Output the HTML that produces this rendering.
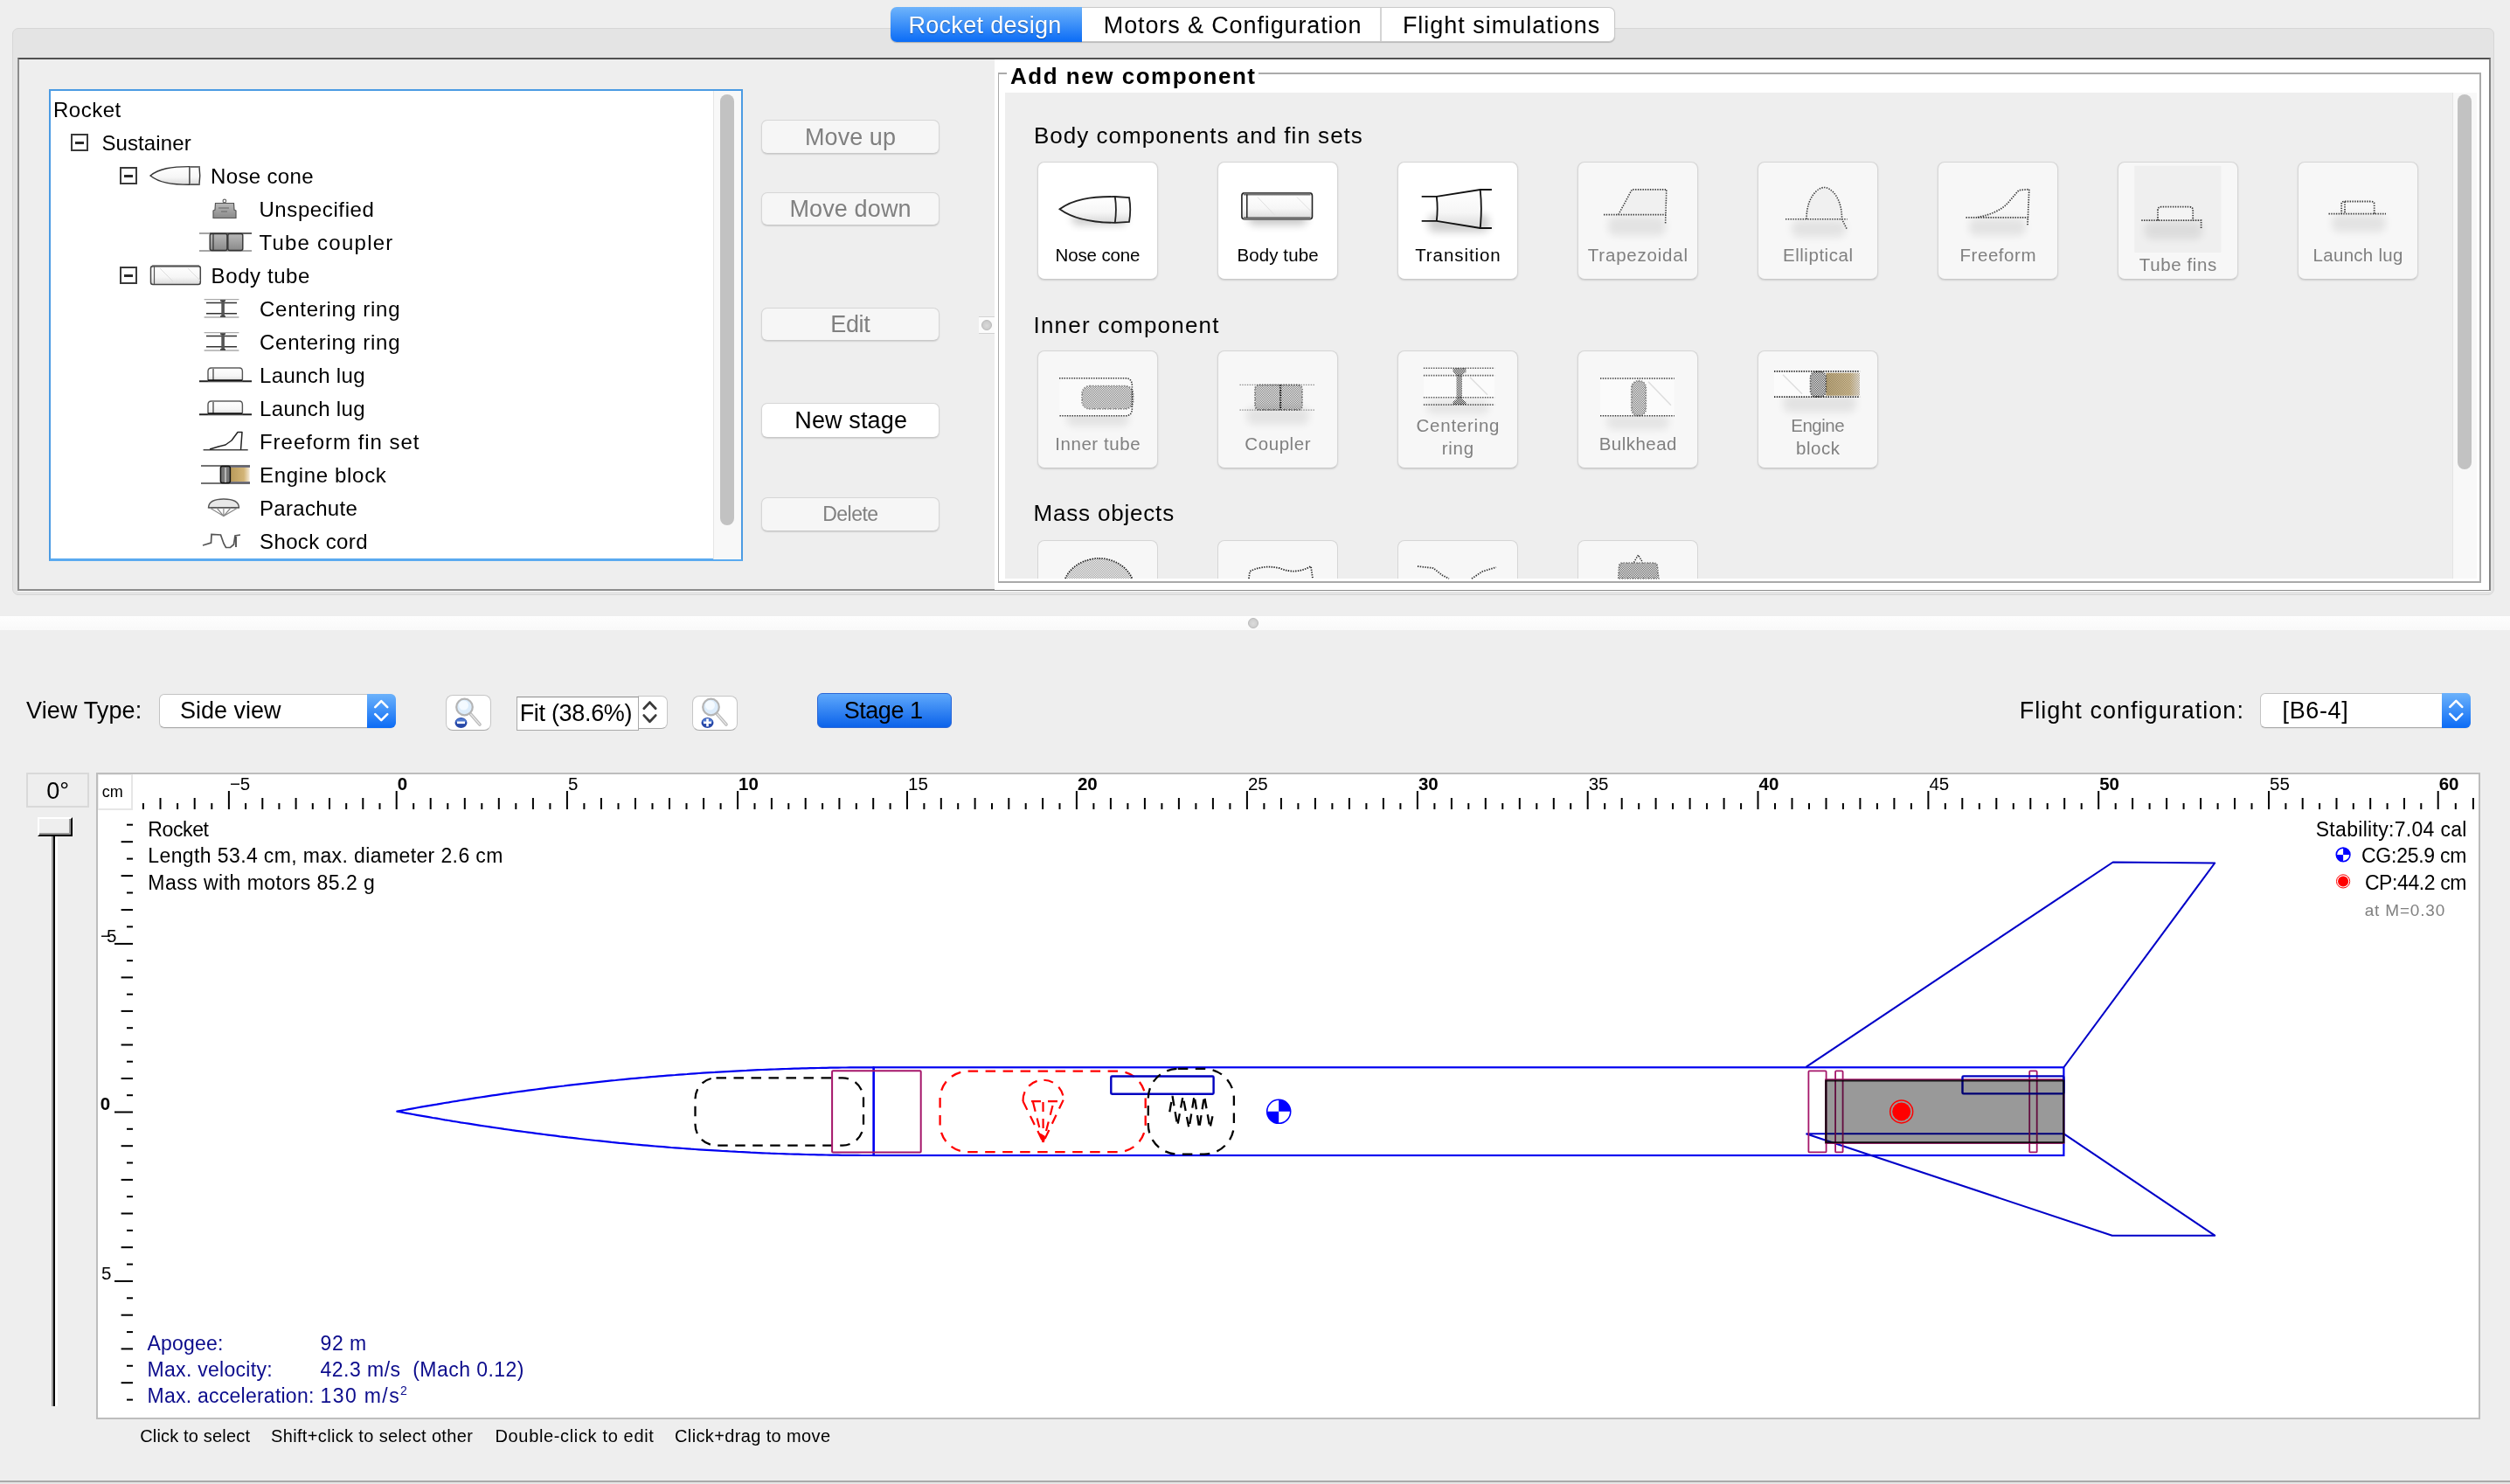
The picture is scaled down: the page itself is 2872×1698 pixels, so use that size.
<!DOCTYPE html>
<html><head><meta charset="utf-8"><style>
html,body{margin:0;padding:0}
body{width:2872px;height:1698px;overflow:hidden;position:relative;background:#eeeeee;font-family:'Liberation Sans',sans-serif}
</style></head><body>
<div style="position:absolute;left:14.0px;top:32.0px;width:2840.0px;height:649.0px;background:#e4e4e4;border:1px solid #d6d6d6;border-radius:7px;box-sizing:border-box"></div>
<div style="position:absolute;left:20.0px;top:66.0px;width:2830.0px;height:610.0px;background:#eeeeee;border-top:2px solid #505050;border-left:2px solid #8c8c8c;border-right:2px solid #858585;border-bottom:2px solid #8c8c8c;box-sizing:border-box"></div>
<div style="position:absolute;left:1019.0px;top:8.0px;width:219.0px;height:40.0px;background:linear-gradient(#6fb4fb,#0b6cf6);border-radius:7px 0 0 7px;box-shadow:0 1px 1px rgba(0,0,0,0.25)"></div>
<div style="position:absolute;left:1238.0px;top:8.0px;width:610.0px;height:40.0px;background:#fff;border:1px solid #c9c9c9;border-left:none;border-radius:0 7px 7px 0;box-sizing:border-box;box-shadow:0 1px 1px rgba(0,0,0,0.2)"></div>
<div style="position:absolute;left:1579.0px;top:9.0px;width:2.0px;height:38.0px;background:#d4d4d4"></div>
<div style="position:absolute;left:56.0px;top:102.0px;width:794.0px;height:539.6px;background:#fff;border:2px solid #4b9be3;border-bottom:3px solid #5aaaf0;box-sizing:border-box"></div>
<div style="position:absolute;left:20.0px;top:676.0px;width:2830.0px;height:1.0px;background:#fafafa"></div>
<div style="position:absolute;left:816.0px;top:104.0px;width:32.0px;height:536.0px;background:#f8f8f8;border-left:1px solid #e6e6e6;box-sizing:border-box"></div>
<div style="position:absolute;left:824.0px;top:108.0px;width:16.0px;height:493.0px;background:#c2c2c2;border-radius:8px"></div>
<div style="position:absolute;left:81.0px;top:153.0px;width:20.0px;height:20.0px;border:2px solid #3a3a3a;box-sizing:border-box;background:#fff"></div>
<div style="position:absolute;left:86.0px;top:161.5px;width:10.0px;height:3.0px;background:#2a2a2a"></div>
<div style="position:absolute;left:137.0px;top:191.0px;width:20.0px;height:20.0px;border:2px solid #3a3a3a;box-sizing:border-box;background:#fff"></div>
<div style="position:absolute;left:142.0px;top:199.5px;width:10.0px;height:3.0px;background:#2a2a2a"></div>
<div style="position:absolute;left:137.0px;top:305.0px;width:20.0px;height:20.0px;border:2px solid #3a3a3a;box-sizing:border-box;background:#fff"></div>
<div style="position:absolute;left:142.0px;top:313.5px;width:10.0px;height:3.0px;background:#2a2a2a"></div>
<div style="position:absolute;left:871.0px;top:136.7px;width:203.5px;height:39.3px;background:#f6f6f6;border:1px solid #d6d6d6;border-bottom-color:#c8c8c8;border-radius:7px;box-sizing:border-box;box-shadow:0 1px 1.5px rgba(0,0,0,0.12)"></div>
<div style="position:absolute;left:871.0px;top:219.7px;width:203.5px;height:38.3px;background:#f6f6f6;border:1px solid #d6d6d6;border-bottom-color:#c8c8c8;border-radius:7px;box-sizing:border-box;box-shadow:0 1px 1.5px rgba(0,0,0,0.12)"></div>
<div style="position:absolute;left:871.0px;top:351.7px;width:203.5px;height:38.3px;background:#f6f6f6;border:1px solid #d6d6d6;border-bottom-color:#c8c8c8;border-radius:7px;box-sizing:border-box;box-shadow:0 1px 1.5px rgba(0,0,0,0.12)"></div>
<div style="position:absolute;left:871.0px;top:460.7px;width:203.5px;height:40.3px;background:#ffffff;border:1px solid #d6d6d6;border-bottom-color:#c8c8c8;border-radius:7px;box-sizing:border-box;box-shadow:0 1px 1.5px rgba(0,0,0,0.12)"></div>
<div style="position:absolute;left:871.0px;top:568.7px;width:203.5px;height:39.3px;background:#f6f6f6;border:1px solid #d6d6d6;border-bottom-color:#c8c8c8;border-radius:7px;box-sizing:border-box;box-shadow:0 1px 1.5px rgba(0,0,0,0.12)"></div>
<div style="position:absolute;left:1120.0px;top:362.0px;width:18.0px;height:20.0px;background:#fbfbfb;border-top:1px solid #d2d2d2;border-bottom:1px solid #d2d2d2;box-sizing:border-box"></div>
<div style="position:absolute;left:1123.0px;top:366.0px;width:12.0px;height:12.0px;background:radial-gradient(circle at 50% 55%,#dadada,#c4c4c4);border:1px solid #b8b8b8;border-radius:50%;box-sizing:border-box"></div>
<div style="position:absolute;left:1138.0px;top:68.0px;width:1710.0px;height:607.0px;background:#fff"></div>
<div style="position:absolute;left:1142.0px;top:83.0px;width:1697.0px;height:584.0px;border:2px solid #aaaaaa;border-left-width:1px;box-sizing:border-box"></div>
<div style="position:absolute;left:1152.0px;top:70.0px;width:288.0px;height:30.0px;background:#fff"></div>
<div style="position:absolute;left:1150.0px;top:106.0px;width:1684.0px;height:556.0px;background:#eeeeee"></div>
<div style="position:absolute;left:2806.0px;top:106.0px;width:28.0px;height:556.0px;background:#f8f8f8;border-left:1px solid #e4e4e4;box-sizing:border-box"></div>
<div style="position:absolute;left:2812.0px;top:108.0px;width:16.0px;height:429.0px;background:#c2c2c2;border-radius:8px"></div>
<div style="position:absolute;left:1187.3px;top:185.2px;width:137.4px;height:134.8px;background:#ffffff;border:1px solid #d6d6d6;border-bottom-color:#c9c9c9;border-radius:8px;box-sizing:border-box;box-shadow:0 1px 2px rgba(0,0,0,0.13);"></div>
<div style="position:absolute;left:1393.3px;top:185.2px;width:137.4px;height:134.8px;background:#ffffff;border:1px solid #d6d6d6;border-bottom-color:#c9c9c9;border-radius:8px;box-sizing:border-box;box-shadow:0 1px 2px rgba(0,0,0,0.13);"></div>
<div style="position:absolute;left:1599.3px;top:185.2px;width:137.4px;height:134.8px;background:#ffffff;border:1px solid #d6d6d6;border-bottom-color:#c9c9c9;border-radius:8px;box-sizing:border-box;box-shadow:0 1px 2px rgba(0,0,0,0.13);"></div>
<div style="position:absolute;left:1805.3px;top:185.2px;width:137.4px;height:134.8px;background:#f7f7f7;border:1px solid #d6d6d6;border-bottom-color:#c9c9c9;border-radius:8px;box-sizing:border-box;box-shadow:0 1px 2px rgba(0,0,0,0.13);"></div>
<div style="position:absolute;left:2011.3px;top:185.2px;width:137.4px;height:134.8px;background:#f7f7f7;border:1px solid #d6d6d6;border-bottom-color:#c9c9c9;border-radius:8px;box-sizing:border-box;box-shadow:0 1px 2px rgba(0,0,0,0.13);"></div>
<div style="position:absolute;left:2217.3px;top:185.2px;width:137.4px;height:134.8px;background:#f7f7f7;border:1px solid #d6d6d6;border-bottom-color:#c9c9c9;border-radius:8px;box-sizing:border-box;box-shadow:0 1px 2px rgba(0,0,0,0.13);"></div>
<div style="position:absolute;left:2423.3px;top:185.2px;width:137.4px;height:134.8px;background:#f7f7f7;border:1px solid #d6d6d6;border-bottom-color:#c9c9c9;border-radius:8px;box-sizing:border-box;box-shadow:0 1px 2px rgba(0,0,0,0.13);"></div>
<div style="position:absolute;left:2629.3px;top:185.2px;width:137.4px;height:134.8px;background:#f7f7f7;border:1px solid #d6d6d6;border-bottom-color:#c9c9c9;border-radius:8px;box-sizing:border-box;box-shadow:0 1px 2px rgba(0,0,0,0.13);"></div>
<div style="position:absolute;left:1187.3px;top:401.3px;width:137.4px;height:134.9px;background:#f7f7f7;border:1px solid #d6d6d6;border-bottom-color:#c9c9c9;border-radius:8px;box-sizing:border-box;box-shadow:0 1px 2px rgba(0,0,0,0.13);"></div>
<div style="position:absolute;left:1393.3px;top:401.3px;width:137.4px;height:134.9px;background:#f7f7f7;border:1px solid #d6d6d6;border-bottom-color:#c9c9c9;border-radius:8px;box-sizing:border-box;box-shadow:0 1px 2px rgba(0,0,0,0.13);"></div>
<div style="position:absolute;left:1599.3px;top:401.3px;width:137.4px;height:134.9px;background:#f7f7f7;border:1px solid #d6d6d6;border-bottom-color:#c9c9c9;border-radius:8px;box-sizing:border-box;box-shadow:0 1px 2px rgba(0,0,0,0.13);"></div>
<div style="position:absolute;left:1805.3px;top:401.3px;width:137.4px;height:134.9px;background:#f7f7f7;border:1px solid #d6d6d6;border-bottom-color:#c9c9c9;border-radius:8px;box-sizing:border-box;box-shadow:0 1px 2px rgba(0,0,0,0.13);"></div>
<div style="position:absolute;left:2011.3px;top:401.3px;width:137.4px;height:134.9px;background:#f7f7f7;border:1px solid #d6d6d6;border-bottom-color:#c9c9c9;border-radius:8px;box-sizing:border-box;box-shadow:0 1px 2px rgba(0,0,0,0.13);"></div>
<div style="position:absolute;left:1187.3px;top:617.6px;width:137.4px;height:44.4px;background:#f7f7f7;border:1px solid #d6d6d6;border-bottom:none;border-radius:8px 8px 0 0;box-sizing:border-box;"></div>
<div style="position:absolute;left:1393.3px;top:617.6px;width:137.4px;height:44.4px;background:#f7f7f7;border:1px solid #d6d6d6;border-bottom:none;border-radius:8px 8px 0 0;box-sizing:border-box;"></div>
<div style="position:absolute;left:1599.3px;top:617.6px;width:137.4px;height:44.4px;background:#f7f7f7;border:1px solid #d6d6d6;border-bottom:none;border-radius:8px 8px 0 0;box-sizing:border-box;"></div>
<div style="position:absolute;left:1805.3px;top:617.6px;width:137.4px;height:44.4px;background:#f7f7f7;border:1px solid #d6d6d6;border-bottom:none;border-radius:8px 8px 0 0;box-sizing:border-box;"></div>
<div style="position:absolute;left:0.0px;top:704.5px;width:2872.0px;height:16.5px;background:linear-gradient(#fefefe,#f9f9f9)"></div>
<div style="position:absolute;left:1428.0px;top:707.0px;width:12.0px;height:12.0px;background:radial-gradient(circle at 50% 55%,#dcdcdc,#c6c6c6);border:1px solid #b9b9b9;border-radius:50%;box-sizing:border-box"></div>
<div style="position:absolute;left:181.7px;top:793.5px;width:270.8px;height:39.2px;background:#fff;border:1px solid #c3c3c3;border-bottom-color:#aaaaaa;border-radius:6px;box-sizing:border-box;box-shadow:0 1px 0 rgba(0,0,0,0.05)"></div>
<div style="position:absolute;left:420.0px;top:793.5px;width:32.5px;height:39.2px;background:linear-gradient(#6cb2fb,#0b6bf5);border-radius:0 6px 6px 0"></div>
<div style="position:absolute;left:2585.6px;top:793.0px;width:241.0px;height:39.6px;background:#fff;border:1px solid #c3c3c3;border-bottom-color:#aaaaaa;border-radius:6px;box-sizing:border-box;box-shadow:0 1px 0 rgba(0,0,0,0.05)"></div>
<div style="position:absolute;left:2794.0px;top:793.0px;width:32.6px;height:39.6px;background:linear-gradient(#6cb2fb,#0b6bf5);border-radius:0 6px 6px 0"></div>
<div style="position:absolute;left:509.7px;top:795.4px;width:52.3px;height:41.1px;background:#fff;border:1px solid #c6c6c6;border-bottom-color:#a9a9a9;border-radius:8px;box-sizing:border-box"></div>
<div style="position:absolute;left:791.6px;top:795.5px;width:52.4px;height:40.8px;background:#fff;border:1px solid #c6c6c6;border-bottom-color:#a9a9a9;border-radius:8px;box-sizing:border-box"></div>
<div style="position:absolute;left:730.0px;top:795.5px;width:34.0px;height:38.5px;background:#fff;border:1px solid #c6c6c6;border-bottom-color:#a9a9a9;border-radius:0 7px 7px 0;box-sizing:border-box"></div>
<div style="position:absolute;left:591.0px;top:796.8px;width:140.0px;height:39.5px;background:#fff;border:1px solid #a9a9a9;border-top-color:#8f8f8f;box-sizing:border-box"></div>
<div style="position:absolute;left:935.0px;top:793.0px;width:154.0px;height:39.7px;background:linear-gradient(#5ea8fb,#0b62ea);border:1px solid #2a66d6;border-radius:6px;box-sizing:border-box"></div>
<div style="position:absolute;left:30.0px;top:884.3px;width:72.0px;height:39.4px;background:#eeeeee;border:2px solid #d9d9d9;box-sizing:border-box"></div>
<div style="position:absolute;left:43.0px;top:935.0px;width:40.0px;height:22.0px;background:#eeeeee;border-top:2px solid #fff;border-left:2px solid #fff;border-right:2px solid #000;border-bottom:2px solid #000;box-sizing:border-box;box-shadow:inset -2px -2px 0 #999"></div>
<div style="position:absolute;left:59.0px;top:957.0px;width:2.0px;height:652.0px;background:#999"></div>
<div style="position:absolute;left:61.0px;top:957.0px;width:2.0px;height:652.0px;background:#000"></div>
<div style="position:absolute;left:63.0px;top:957.0px;width:3.0px;height:652.0px;background:#fff"></div>
<div style="position:absolute;left:110.0px;top:884.0px;width:2728.0px;height:739.5px;background:#fff;border:2px solid #bdbdbd;box-sizing:border-box"></div>
<div style="position:absolute;left:112.0px;top:886.0px;width:40.0px;height:40.5px;background:#fff;border-right:2px solid #e6e6e6;border-bottom:2px solid #e6e6e6;border-left:1px solid #eeeeee;border-top:1px solid #eeeeee;box-sizing:border-box"></div>
<div style="position:absolute;left:0.0px;top:1694.0px;width:2872.0px;height:2.0px;background:#a9a9a9"></div>
<div style="position:absolute;left:0.0px;top:1696.0px;width:2872.0px;height:2.0px;background:#e6e6e6"></div>
<svg style="position:absolute;left:0;top:0" width="2872" height="1698" viewBox="0 0 2872 1698">
<path d="M429.25,809.1 L436.25,802.1 L443.25,809.1 M429.25,817.1 L436.25,824.1 L443.25,817.1" fill="none" stroke="#fff" stroke-width="2.6" stroke-linecap="round" stroke-linejoin="round"/>
<path d="M2803.3,808.8 L2810.3,801.8 L2817.3,808.8 M2803.3,816.8 L2810.3,823.8 L2817.3,816.8" fill="none" stroke="#fff" stroke-width="2.6" stroke-linecap="round" stroke-linejoin="round"/>
<path d="M736.8,810.8 L743.5,803.6 L750.2,810.8 M736.8,818.6 L743.5,825.8 L750.2,818.6" fill="none" stroke="#3a3a3a" stroke-width="2.8" stroke-linecap="round" stroke-linejoin="round"/>
<g fill="#000"><rect x="162.9" y="919" width="2" height="7"/><rect x="182.5" y="913" width="2" height="13"/><rect x="202.1" y="919" width="2" height="7"/><rect x="221.7" y="913" width="2" height="13"/><rect x="241.3" y="919" width="2" height="7"/><rect x="260.9" y="905" width="2" height="21"/><rect x="280.1" y="919" width="2" height="7"/><rect x="299.3" y="913" width="2" height="13"/><rect x="318.4" y="919" width="2" height="7"/><rect x="337.6" y="913" width="2" height="13"/><rect x="356.8" y="919" width="2" height="7"/><rect x="376.0" y="913" width="2" height="13"/><rect x="395.2" y="919" width="2" height="7"/><rect x="414.3" y="913" width="2" height="13"/><rect x="433.5" y="919" width="2" height="7"/><rect x="452.7" y="905" width="2" height="21"/><rect x="472.2" y="919" width="2" height="7"/><rect x="491.7" y="913" width="2" height="13"/><rect x="511.3" y="919" width="2" height="7"/><rect x="530.8" y="913" width="2" height="13"/><rect x="550.3" y="919" width="2" height="7"/><rect x="569.8" y="913" width="2" height="13"/><rect x="589.3" y="919" width="2" height="7"/><rect x="608.9" y="913" width="2" height="13"/><rect x="628.4" y="919" width="2" height="7"/><rect x="647.9" y="905" width="2" height="21"/><rect x="667.4" y="919" width="2" height="7"/><rect x="686.9" y="913" width="2" height="13"/><rect x="706.5" y="919" width="2" height="7"/><rect x="726.0" y="913" width="2" height="13"/><rect x="745.5" y="919" width="2" height="7"/><rect x="765.0" y="913" width="2" height="13"/><rect x="784.5" y="919" width="2" height="7"/><rect x="804.1" y="913" width="2" height="13"/><rect x="823.6" y="919" width="2" height="7"/><rect x="843.1" y="905" width="2" height="21"/><rect x="862.5" y="919" width="2" height="7"/><rect x="881.9" y="913" width="2" height="13"/><rect x="901.3" y="919" width="2" height="7"/><rect x="920.7" y="913" width="2" height="13"/><rect x="940.1" y="919" width="2" height="7"/><rect x="959.4" y="913" width="2" height="13"/><rect x="978.8" y="919" width="2" height="7"/><rect x="998.2" y="913" width="2" height="13"/><rect x="1017.6" y="919" width="2" height="7"/><rect x="1037.0" y="905" width="2" height="21"/><rect x="1056.4" y="919" width="2" height="7"/><rect x="1075.8" y="913" width="2" height="13"/><rect x="1095.2" y="919" width="2" height="7"/><rect x="1114.6" y="913" width="2" height="13"/><rect x="1134.0" y="919" width="2" height="7"/><rect x="1153.3" y="913" width="2" height="13"/><rect x="1172.7" y="919" width="2" height="7"/><rect x="1192.1" y="913" width="2" height="13"/><rect x="1211.5" y="919" width="2" height="7"/><rect x="1230.9" y="905" width="2" height="21"/><rect x="1250.4" y="919" width="2" height="7"/><rect x="1269.9" y="913" width="2" height="13"/><rect x="1289.4" y="919" width="2" height="7"/><rect x="1308.9" y="913" width="2" height="13"/><rect x="1328.4" y="919" width="2" height="7"/><rect x="1347.9" y="913" width="2" height="13"/><rect x="1367.4" y="919" width="2" height="7"/><rect x="1386.9" y="913" width="2" height="13"/><rect x="1406.4" y="919" width="2" height="7"/><rect x="1425.9" y="905" width="2" height="21"/><rect x="1445.4" y="919" width="2" height="7"/><rect x="1464.9" y="913" width="2" height="13"/><rect x="1484.4" y="919" width="2" height="7"/><rect x="1503.9" y="913" width="2" height="13"/><rect x="1523.4" y="919" width="2" height="7"/><rect x="1542.9" y="913" width="2" height="13"/><rect x="1562.4" y="919" width="2" height="7"/><rect x="1581.9" y="913" width="2" height="13"/><rect x="1601.4" y="919" width="2" height="7"/><rect x="1620.9" y="905" width="2" height="21"/><rect x="1640.4" y="919" width="2" height="7"/><rect x="1659.9" y="913" width="2" height="13"/><rect x="1679.3" y="919" width="2" height="7"/><rect x="1698.8" y="913" width="2" height="13"/><rect x="1718.3" y="919" width="2" height="7"/><rect x="1737.8" y="913" width="2" height="13"/><rect x="1757.3" y="919" width="2" height="7"/><rect x="1776.8" y="913" width="2" height="13"/><rect x="1796.2" y="919" width="2" height="7"/><rect x="1815.7" y="905" width="2" height="21"/><rect x="1835.2" y="919" width="2" height="7"/><rect x="1854.7" y="913" width="2" height="13"/><rect x="1874.2" y="919" width="2" height="7"/><rect x="1893.6" y="913" width="2" height="13"/><rect x="1913.1" y="919" width="2" height="7"/><rect x="1932.6" y="913" width="2" height="13"/><rect x="1952.1" y="919" width="2" height="7"/><rect x="1971.6" y="913" width="2" height="13"/><rect x="1991.1" y="919" width="2" height="7"/><rect x="2010.5" y="905" width="2" height="21"/><rect x="2030.0" y="919" width="2" height="7"/><rect x="2049.5" y="913" width="2" height="13"/><rect x="2069.0" y="919" width="2" height="7"/><rect x="2088.5" y="913" width="2" height="13"/><rect x="2107.9" y="919" width="2" height="7"/><rect x="2127.4" y="913" width="2" height="13"/><rect x="2146.9" y="919" width="2" height="7"/><rect x="2166.4" y="913" width="2" height="13"/><rect x="2185.9" y="919" width="2" height="7"/><rect x="2205.4" y="905" width="2" height="21"/><rect x="2224.8" y="919" width="2" height="7"/><rect x="2244.3" y="913" width="2" height="13"/><rect x="2263.8" y="919" width="2" height="7"/><rect x="2283.3" y="913" width="2" height="13"/><rect x="2302.8" y="919" width="2" height="7"/><rect x="2322.3" y="913" width="2" height="13"/><rect x="2341.7" y="919" width="2" height="7"/><rect x="2361.2" y="913" width="2" height="13"/><rect x="2380.7" y="919" width="2" height="7"/><rect x="2400.2" y="905" width="2" height="21"/><rect x="2419.7" y="919" width="2" height="7"/><rect x="2439.1" y="913" width="2" height="13"/><rect x="2458.6" y="919" width="2" height="7"/><rect x="2478.1" y="913" width="2" height="13"/><rect x="2497.6" y="919" width="2" height="7"/><rect x="2517.1" y="913" width="2" height="13"/><rect x="2536.6" y="919" width="2" height="7"/><rect x="2556.0" y="913" width="2" height="13"/><rect x="2575.5" y="919" width="2" height="7"/><rect x="2595.0" y="905" width="2" height="21"/><rect x="2614.4" y="919" width="2" height="7"/><rect x="2633.7" y="913" width="2" height="13"/><rect x="2653.1" y="919" width="2" height="7"/><rect x="2672.5" y="913" width="2" height="13"/><rect x="2691.8" y="919" width="2" height="7"/><rect x="2711.2" y="913" width="2" height="13"/><rect x="2730.6" y="919" width="2" height="7"/><rect x="2750.0" y="913" width="2" height="13"/><rect x="2769.3" y="919" width="2" height="7"/><rect x="2788.7" y="905" width="2" height="21"/><rect x="2808.8" y="919" width="2" height="7"/><rect x="2828.9" y="913" width="2" height="13"/></g>
<g fill="#000"><rect x="145" y="942.7" width="7.0" height="2"/><rect x="138.6" y="962.2" width="13.4" height="2"/><rect x="145" y="981.6" width="7.0" height="2"/><rect x="138.6" y="1001.1" width="13.4" height="2"/><rect x="145" y="1020.5" width="7.0" height="2"/><rect x="138.6" y="1040.0" width="13.4" height="2"/><rect x="145" y="1059.4" width="7.0" height="2"/><rect x="131" y="1078.9" width="21.0" height="2"/><rect x="145" y="1098.2" width="7.0" height="2"/><rect x="138.6" y="1117.4" width="13.4" height="2"/><rect x="145" y="1136.7" width="7.0" height="2"/><rect x="138.6" y="1155.9" width="13.4" height="2"/><rect x="145" y="1175.2" width="7.0" height="2"/><rect x="138.6" y="1194.5" width="13.4" height="2"/><rect x="145" y="1213.7" width="7.0" height="2"/><rect x="138.6" y="1233.0" width="13.4" height="2"/><rect x="145" y="1252.2" width="7.0" height="2"/><rect x="131" y="1271.5" width="21.0" height="2"/><rect x="145" y="1290.8" width="7.0" height="2"/><rect x="138.6" y="1310.2" width="13.4" height="2"/><rect x="145" y="1329.5" width="7.0" height="2"/><rect x="138.6" y="1348.9" width="13.4" height="2"/><rect x="145" y="1368.2" width="7.0" height="2"/><rect x="138.6" y="1387.5" width="13.4" height="2"/><rect x="145" y="1406.9" width="7.0" height="2"/><rect x="138.6" y="1426.2" width="13.4" height="2"/><rect x="145" y="1445.6" width="7.0" height="2"/><rect x="131" y="1464.9" width="21.0" height="2"/><rect x="145" y="1484.3" width="7.0" height="2"/><rect x="138.6" y="1503.7" width="13.4" height="2"/><rect x="145" y="1523.1" width="7.0" height="2"/><rect x="138.6" y="1542.4" width="13.4" height="2"/><rect x="145" y="1561.8" width="7.0" height="2"/><rect x="138.6" y="1581.2" width="13.4" height="2"/><rect x="145" y="1600.6" width="7.0" height="2"/></g>
<path d="M454.3,1271.7 L458.8,1270.8 L463.4,1270.0 L467.9,1269.1 L472.5,1268.3 L477.0,1267.5 L481.6,1266.7 L486.1,1265.9 L490.7,1265.1 L495.2,1264.3 L499.8,1263.6 L504.3,1262.8 L508.8,1262.0 L513.4,1261.3 L517.9,1260.5 L522.5,1259.8 L527.0,1259.0 L531.6,1258.3 L536.1,1257.6 L540.7,1256.9 L545.2,1256.2 L549.7,1255.5 L554.3,1254.8 L558.8,1254.1 L563.4,1253.4 L567.9,1252.8 L572.5,1252.1 L577.0,1251.4 L581.6,1250.8 L586.1,1250.1 L590.7,1249.5 L595.2,1248.9 L599.7,1248.3 L604.3,1247.7 L608.8,1247.1 L613.4,1246.5 L617.9,1245.9 L622.5,1245.3 L627.0,1244.7 L631.6,1244.1 L636.1,1243.6 L640.6,1243.0 L645.2,1242.5 L649.7,1241.9 L654.3,1241.4 L658.8,1240.9 L663.4,1240.3 L667.9,1239.8 L672.5,1239.3 L677.0,1238.8 L681.6,1238.3 L686.1,1237.9 L690.6,1237.4 L695.2,1236.9 L699.7,1236.4 L704.3,1236.0 L708.8,1235.5 L713.4,1235.1 L717.9,1234.7 L722.5,1234.2 L727.0,1233.8 L731.5,1233.4 L736.1,1233.0 L740.6,1232.6 L745.2,1232.2 L749.7,1231.8 L754.3,1231.4 L758.8,1231.1 L763.4,1230.7 L767.9,1230.3 L772.5,1230.0 L777.0,1229.6 L781.5,1229.3 L786.1,1229.0 L790.6,1228.6 L795.2,1228.3 L799.7,1228.0 L804.3,1227.7 L808.8,1227.4 L813.4,1227.1 L817.9,1226.9 L822.4,1226.6 L827.0,1226.3 L831.5,1226.1 L836.1,1225.8 L840.6,1225.6 L845.2,1225.3 L849.7,1225.1 L854.3,1224.9 L858.8,1224.6 L863.4,1224.4 L867.9,1224.2 L872.4,1224.0 L877.0,1223.8 L881.5,1223.6 L886.1,1223.5 L890.6,1223.3 L895.2,1223.1 L899.7,1223.0 L904.3,1222.8 L908.8,1222.7 L913.3,1222.6 L917.9,1222.4 L922.4,1222.3 L927.0,1222.2 L931.5,1222.1 L936.1,1222.0 L940.6,1221.9 L945.2,1221.8 L949.7,1221.7 L954.2,1221.6 L958.8,1221.6 L963.3,1221.5 L967.9,1221.5 L972.4,1221.4 L977.0,1221.4 L981.5,1221.4 L986.1,1221.3 L990.6,1221.3 L995.2,1221.3 L999.7,1221.3 L999.7,1322.0 L995.2,1322.0 L990.6,1322.0 L986.1,1322.0 L981.5,1321.9 L977.0,1321.9 L972.4,1321.9 L967.9,1321.8 L963.3,1321.8 L958.8,1321.7 L954.2,1321.7 L949.7,1321.6 L945.2,1321.5 L940.6,1321.4 L936.1,1321.3 L931.5,1321.2 L927.0,1321.1 L922.4,1321.0 L917.9,1320.9 L913.3,1320.7 L908.8,1320.6 L904.3,1320.5 L899.7,1320.3 L895.2,1320.2 L890.6,1320.0 L886.1,1319.8 L881.5,1319.7 L877.0,1319.5 L872.4,1319.3 L867.9,1319.1 L863.4,1318.9 L858.8,1318.7 L854.3,1318.4 L849.7,1318.2 L845.2,1318.0 L840.6,1317.7 L836.1,1317.5 L831.5,1317.2 L827.0,1317.0 L822.4,1316.7 L817.9,1316.4 L813.4,1316.2 L808.8,1315.9 L804.3,1315.6 L799.7,1315.3 L795.2,1315.0 L790.6,1314.7 L786.1,1314.3 L781.5,1314.0 L777.0,1313.7 L772.5,1313.3 L767.9,1313.0 L763.4,1312.6 L758.8,1312.2 L754.3,1311.9 L749.7,1311.5 L745.2,1311.1 L740.6,1310.7 L736.1,1310.3 L731.5,1309.9 L727.0,1309.5 L722.5,1309.1 L717.9,1308.6 L713.4,1308.2 L708.8,1307.8 L704.3,1307.3 L699.7,1306.9 L695.2,1306.4 L690.6,1305.9 L686.1,1305.4 L681.6,1305.0 L677.0,1304.5 L672.5,1304.0 L667.9,1303.5 L663.4,1303.0 L658.8,1302.4 L654.3,1301.9 L649.7,1301.4 L645.2,1300.8 L640.6,1300.3 L636.1,1299.7 L631.6,1299.2 L627.0,1298.6 L622.5,1298.0 L617.9,1297.4 L613.4,1296.8 L608.8,1296.2 L604.3,1295.6 L599.7,1295.0 L595.2,1294.4 L590.7,1293.8 L586.1,1293.2 L581.6,1292.5 L577.0,1291.9 L572.5,1291.2 L567.9,1290.5 L563.4,1289.9 L558.8,1289.2 L554.3,1288.5 L549.7,1287.8 L545.2,1287.1 L540.7,1286.4 L536.1,1285.7 L531.6,1285.0 L527.0,1284.3 L522.5,1283.5 L517.9,1282.8 L513.4,1282.0 L508.8,1281.3 L504.3,1280.5 L499.8,1279.7 L495.2,1279.0 L490.7,1278.2 L486.1,1277.4 L481.6,1276.6 L477.0,1275.8 L472.5,1275.0 L467.9,1274.2 L463.4,1273.3 L458.8,1272.5 L454.3,1271.7 Z" fill="none" stroke="#0000f0" stroke-width="2.2" stroke-linejoin="round"/>
<rect x="999.7" y="1221.3000000000002" width="1361.7" height="100.7" fill="none" stroke="#0000f0" stroke-width="2.2"/>
<rect x="795.5" y="1233.3" width="192.5" height="77.29999999999995" rx="24" ry="24" fill="none" stroke="#000" stroke-width="2.3" stroke-dasharray="11.5 8.5"/>
<rect x="952.1" y="1225.3" width="101.60000000000002" height="93.20000000000005" rx="1" fill="none" stroke="#a5166a" stroke-width="2"/>
<rect x="1075.6" y="1225.7" width="235.10000000000014" height="92.5" rx="32" ry="32" fill="none" stroke="#ff0000" stroke-width="2.3" stroke-dasharray="11.5 8.5"/>
<g fill="none" stroke="#ff0000" stroke-width="2.2" stroke-dasharray="11 8"><path d="M1170.5,1260 A23.2,23.2 0 0 1 1217,1258"/><path d="M1170.5,1260 L1193.7,1307 L1217,1258"/><path d="M1180,1260.2 L1212,1260.2"/><path d="M1182,1261 L1193.5,1307 M1193.5,1261 L1193.7,1307 M1204.5,1265 L1193.7,1307"/></g>
<path d="M1189,1296 L1194,1307 L1196,1300 Z" fill="#ff0000"/>
<rect x="1271.3" y="1231.5" width="117.29999999999995" height="20.200000000000045" rx="1.2" fill="none" stroke="#0000c0" stroke-width="2.4"/>
<rect x="1313.8" y="1222.9" width="98.10000000000014" height="97.69999999999982" rx="34" ry="34" fill="none" stroke="#000" stroke-width="2.3" stroke-dasharray="11.5 8.5"/>
<path d="M1338.3,1272.3 L1341.5,1254 L1347.3,1288 L1353.5,1254.5 L1360.5,1291 L1366.6,1253.6 L1372.2,1291 L1378,1254 L1384.5,1291 L1387.5,1277" fill="none" stroke="#000" stroke-width="2.3" stroke-dasharray="11.5 7"/>
<circle cx="1463.2" cy="1271.8" r="13.5" fill="#fff" stroke="#0000ff" stroke-width="1.6"/><path d="M1463.2,1271.8 L1476.7,1271.8 A13.5,13.5 0 0 0 1463.2,1258.3 Z" fill="#0000ff"/><path d="M1463.2,1271.8 L1449.7,1271.8 A13.5,13.5 0 0 0 1463.2,1285.3 Z" fill="#0000ff"/>
<path d="M2066.5,1220.8 L2417.7,986.5 L2534.2,987.5 L2361.6,1221" fill="none" stroke="#0000c8" stroke-width="2.1" stroke-linejoin="round"/>
<path d="M2066.5,1297.3 L2416.8,1413.7 L2534.2,1413.7 L2361.6,1297.3 L2066.5,1297.3" fill="none" stroke="#0000c8" stroke-width="2.1" stroke-linejoin="round"/>
<rect x="2069.4" y="1225.4" width="20.199999999999818" height="93.0" rx="1" fill="none" stroke="#a5166a" stroke-width="1.8"/>
<rect x="2100.1" y="1225.4" width="8.5" height="93.0" rx="1" fill="none" stroke="#a5166a" stroke-width="1.8"/>
<rect x="2322.2" y="1225.4" width="8.5" height="93.0" rx="1" fill="none" stroke="#a5166a" stroke-width="1.8"/>
<rect x="2089.2" y="1235.2" width="272.2000000000003" height="72.79999999999995" fill="none" stroke="#a5166a" stroke-width="1.8"/>
<rect x="2245.5" y="1231.4" width="115.90000000000009" height="20.0" rx="1.2" fill="none" stroke="#0000c0" stroke-width="2.4"/>
<rect x="2089.2" y="1236.5" width="272.2000000000003" height="70.70000000000005" fill="rgba(0,0,0,0.4)" stroke="rgba(0,0,0,0.85)" stroke-width="2"/>
<circle cx="2175.7" cy="1271.9" r="13" fill="none" stroke="#ff0000" stroke-width="1.5"/><circle cx="2175.7" cy="1271.9" r="10.5" fill="#ff0000"/>
<circle cx="2681.1" cy="977.9" r="7.8" fill="#fff" stroke="#0000ff" stroke-width="1.6"/><path d="M2681.1,977.9 L2688.9,977.9 A7.8,7.8 0 0 0 2681.1,970.1 Z" fill="#0000ff"/><path d="M2681.1,977.9 L2673.2999999999997,977.9 A7.8,7.8 0 0 0 2681.1,985.6999999999999 Z" fill="#0000ff"/>
<circle cx="2681.1" cy="1008.4" r="7.6" fill="none" stroke="#ff0000" stroke-width="1"/><circle cx="2681.1" cy="1008.4" r="6" fill="#ff0000"/>
<defs>
<filter id="blur3" x="-50%" y="-50%" width="200%" height="200%"><feGaussianBlur stdDeviation="3.5"/></filter>
<filter id="blur5" x="-50%" y="-100%" width="200%" height="300%"><feGaussianBlur stdDeviation="5"/></filter>
<filter id="blur2" x="-50%" y="-50%" width="200%" height="200%"><feGaussianBlur stdDeviation="2"/></filter>
<linearGradient id="gwhite" x1="0" y1="0" x2="0" y2="1"><stop offset="0" stop-color="#ffffff"/><stop offset="0.6" stop-color="#f6f6f6"/><stop offset="1" stop-color="#d9d9d9"/></linearGradient>
<linearGradient id="ggray" x1="0" y1="0" x2="0" y2="1"><stop offset="0" stop-color="#b8b8b8"/><stop offset="1" stop-color="#8a8a8a"/></linearGradient>
<linearGradient id="gtan" x1="0" y1="0" x2="1" y2="0"><stop offset="0" stop-color="#b89a5a"/><stop offset="0.7" stop-color="#d2b476"/><stop offset="1" stop-color="#f4ead8"/></linearGradient>
<pattern id="dith" width="2" height="2" patternUnits="userSpaceOnUse"><rect width="1" height="1" fill="#000"/><rect x="1" y="1" width="1" height="1" fill="#000"/></pattern>
</defs>
<path d="M172,201 C182,193 196,190.6 216.9,190.6 L228,190.6 Q229.5,201 228,211.3 L216.9,211.3 C196,211.3 182,209 172,201 Z" fill="url(#gwhite)" stroke="#333" stroke-width="1.4"/><path d="M216.9,190.6 L216.9,211.3" stroke="#333" stroke-width="1.4"/><path d="M217,191.1 L228,191.1 M217,210.8 L228,210.8" stroke="#777" stroke-width="1.6"/>
<circle cx="256.9" cy="230" r="1.8" fill="none" stroke="#666" stroke-width="1.2"/><path d="M246.5,232.5 L267.5,232.5 L268,240 L270,241 L270,249.5 L244,249.5 L244,241 L246,240 Z" fill="url(#ggray)" stroke="#555" stroke-width="1.2"/><path d="M250,238 L262,238 M253,242 L260,242" stroke="#666" stroke-width="1"/>
<path d="M228,267 L288,267 M228,287 L288,287" stroke="#888" stroke-width="1.3"/><path d="M240,267 L288,267" stroke="#222" stroke-width="1.4" stroke-opacity="0.7"/><rect x="240.2" y="267.5" width="19.7" height="19" rx="2" fill="url(#ggray)" stroke="#333" stroke-width="1.4"/><rect x="260.8" y="267.5" width="17" height="19" rx="2" fill="url(#ggray)" stroke="#333" stroke-width="1.4"/><path d="M244,268 L244,286" stroke="#333" stroke-width="1.2"/>
<rect x="172.5" y="304.6" width="56.8" height="20.8" rx="2.5" fill="url(#gwhite)" stroke="#444" stroke-width="1.5"/><path d="M176.5,305 L176.5,325" stroke="#555" stroke-width="1.2"/><path d="M174,304.6 L228,304.6" stroke="#555" stroke-width="2"/><path d="M183,307 L198,322 M215,307 L229,321" stroke="#ddd" stroke-width="1"/>
<path d="M233.6,342.6 L273.4,342.6 M233.6,363 L273.4,363" stroke="#aaa" stroke-width="1.3"/><path d="M236,346.6 L271,346.6 M236,358.8 L271,358.8" stroke="#333" stroke-width="1.5"/><rect x="253.3" y="344" width="3.6" height="18" fill="#555"/><path d="M252,344 L258,344 M252,362 L258,362" stroke="#333" stroke-width="1.3"/>
<path d="M233.6,380.6 L273.4,380.6 M233.6,401 L273.4,401" stroke="#aaa" stroke-width="1.3"/><path d="M236,384.6 L271,384.6 M236,396.8 L271,396.8" stroke="#333" stroke-width="1.5"/><rect x="253.3" y="382" width="3.6" height="18" fill="#555"/><path d="M252,382 L258,382 M252,400 L258,400" stroke="#333" stroke-width="1.3"/>
<path d="M228,436.3 L288,436.3" stroke="#222" stroke-width="2"/><path d="M238,436.3 L238,425 Q238,421 242,421 L274,421 Q277.4,421 277.4,425 L277.4,436.3" fill="url(#gwhite)" stroke="#555" stroke-width="1.4"/><path d="M244,421.5 L244,436" stroke="#444" stroke-width="1.3"/><path d="M242,421.2 L274,421.2" stroke="#888" stroke-width="1.6"/><path d="M238,435.2 L277,435.2" stroke="#111" stroke-width="1.8"/>
<path d="M228,474.3 L288,474.3" stroke="#222" stroke-width="2"/><path d="M238,474.3 L238,463 Q238,459 242,459 L274,459 Q277.4,459 277.4,463 L277.4,474.3" fill="url(#gwhite)" stroke="#555" stroke-width="1.4"/><path d="M244,459.5 L244,474" stroke="#444" stroke-width="1.3"/><path d="M242,459.2 L274,459.2" stroke="#888" stroke-width="1.6"/><path d="M238,473.2 L277,473.2" stroke="#111" stroke-width="1.8"/>
<path d="M232.6,514.8 L283.7,514.8" stroke="#444" stroke-width="1.6"/><path d="M240,514 L250,511 L258,509 L265,504 L272,494.5 L277,494.5 L275.5,514.8" fill="none" stroke="#222" stroke-width="1.5" stroke-linejoin="round"/>
<path d="M230,533 L286,533 M230,553 L286,553" stroke="#444" stroke-width="1.6"/><rect x="263.5" y="535" width="22.2" height="16" fill="url(#gtan)"/><path d="M264,534.2 L286,534.2 M264,551.8 L286,551.8" stroke="#556" stroke-width="1.8" stroke-opacity="0.8"/><rect x="252.4" y="533.5" width="11" height="19" rx="2" fill="#777" stroke="#111" stroke-width="1.5"/><path d="M258,535 L258,552" stroke="#ccc" stroke-width="1.5"/>
<path d="M238.5,580.7 C239,573 246,571 256,571 C266,571 273,573 273.5,580.7 Z" fill="#e8e8e8" stroke="#555" stroke-width="1.4"/><path d="M238.5,580.7 L273.5,580.7" stroke="#555" stroke-width="1.6"/><path d="M240,581 L255.9,590.6 L272,581 M248,581 L255.9,590.6 L264,581 M255.9,581 L255.9,590" fill="none" stroke="#888" stroke-width="1.2"/>
<path d="M232,624 L241.5,621 L242,611.5 L252.5,612 L256,622 L258.5,626.5 L263.5,626.5 L267.5,623 L269,613 L275,612" fill="none" stroke="#555" stroke-width="1.7"/><path d="M270,614 L270,626" stroke="#333" stroke-width="1.6"/>
<rect x="1226" y="243.6" width="64" height="14.000000000000028" rx="8" fill="#000" opacity="0.192" filter="url(#blur5)"/><path d="M1212.5,239.3 C1228,227.6 1248,225.0 1275.8,225.0 L1292,226.0 Q1294.5,239.6 1292,253.8 L1275.8,254.8 C1248,254.8 1228,250.6 1212.5,239.3 Z" fill="url(#gwhite)" stroke="#222" stroke-width="1.8"/><path d="M1275.8,225.0 Q1278,239.6 1275.8,254.8" fill="none" stroke="#222" stroke-width="1.8"/>
<rect x="1428" y="241.6" width="68" height="16.00000000000003" rx="8" fill="#000" opacity="0.21" filter="url(#blur5)"/><rect x="1420.9" y="220.89999999999998" width="80.6" height="29.8" rx="3" fill="url(#gwhite)" stroke="#222" stroke-width="1.6"/><path d="M1423,221.89999999999998 L1499.5,221.89999999999998 M1423,249.7 L1499.5,249.7" stroke="#707070" stroke-width="3"/><path d="M1426.8,222.6 L1426.8,249.1" stroke="#222" stroke-width="1.5"/><path d="M1439,225.6 L1459,246.6 M1484,225.6 L1500,241.6" stroke="#e0e0e0" stroke-width="1"/>
<rect x="1634" y="245.6" width="70" height="20.00000000000003" rx="8" fill="#000" opacity="0.192" filter="url(#blur5)"/><path d="M1643.8,224.8 L1693.7,217.0 L1693.7,261.0 L1643.8,252.8 Z" fill="url(#gwhite)"/><path d="M1626.7,224.8 L1643.8,224.8 L1693.7,217.0 L1706.9,217.0 M1626.7,252.8 L1643.8,252.8 L1693.7,261.0 L1706.9,261.0" fill="none" stroke="#111" stroke-width="1.8"/><path d="M1643.8,224.8 Q1645.5,238.6 1643.8,252.8 M1693.7,217.0 Q1696,238.6 1693.7,261.0" fill="none" stroke="#111" stroke-width="1.8"/>
<rect x="1840" y="247.6" width="66" height="22.00000000000003" rx="8" fill="#000" opacity="0.078" filter="url(#blur5)"/><path d="M1851.8,245.6 L1867.3,216.9 L1906.8,216.9 L1905.6,245.6 Z" fill="#f0f0f0"/><path d="M1835,245.6 L1905.6,245.6 M1851.8,245.6 L1867.3,216.9 L1906.8,216.9 L1905.6,255.6" fill="none" stroke="#3a3a3a" stroke-width="1.6" stroke-dasharray="1.4 1.4" />
<rect x="2050" y="251.6" width="62" height="20.00000000000003" rx="8" fill="#000" opacity="0.078" filter="url(#blur5)"/><path d="M2067,250.8 C2067,225.6 2080,214.5 2087.3,214.5 C2095,214.5 2107.6,225.6 2107.6,250.8 Z" fill="#f0f0f0"/><path d="M2043,250.8 L2113.6,250.8 M2067,250.8 C2067,225.6 2080,214.5 2087.3,214.5 C2095,214.5 2107.6,225.6 2107.6,250.8 L2113,261.6" fill="none" stroke="#3a3a3a" stroke-width="1.6" stroke-dasharray="1.4 1.4" />
<rect x="2253" y="249.6" width="65" height="20.00000000000003" rx="8" fill="#000" opacity="0.078" filter="url(#blur5)"/><path d="M2249.5,248.8 L2320.5,248.8 M2263,248.6 C2278,245.6 2290,240.6 2298,231.6 L2310,217.6 L2321.8,216.6 L2320,258.0" fill="none" stroke="#3a3a3a" stroke-width="1.8" stroke-dasharray="1.4 1.4" />
<rect x="2442.3" y="189.9" width="99" height="99" fill="#e9e9e9" opacity="0.6"/><rect x="2454" y="253.6" width="66" height="20.00000000000003" rx="8" fill="#000" opacity="0.078" filter="url(#blur5)"/><rect x="2469" y="236.7" width="40.2" height="15.3" rx="4" fill="#f4f4f4"/><path d="M2450.3,252.2 L2518.6,252.2 L2518.6,261.6 M2469,252.2 L2469,240.6 Q2469,236.7 2473,236.7 L2505,236.7 Q2509.2,236.7 2509.2,240.6 L2509.2,252.2" fill="none" stroke="#3a3a3a" stroke-width="1.8" stroke-dasharray="1.4 1.4" />
<rect x="2668" y="245.6" width="62" height="20.00000000000003" rx="8" fill="#000" opacity="0.078" filter="url(#blur5)"/><path d="M2664.5,244.7 L2730,244.7 M2679.2,244.7 L2679.2,233.6 Q2679.2,230.5 2682,230.5 L2713,230.5 Q2716.7,230.5 2716.7,233.6 L2716.7,244.7 M2683,230.6 L2683,244.6" fill="none" stroke="#3a3a3a" stroke-width="1.8" stroke-dasharray="1.4 1.4" />
<rect x="1220" y="469.7" width="72" height="18.0" rx="8" fill="#000" opacity="0.078" filter="url(#blur5)"/><rect x="1212" y="432.8" width="83.4" height="43" rx="8" fill="#fafafa"/><path d="M1212,432.8 L1288,432.8 Q1295.4,432.8 1295.4,441.7 L1295.4,466.7 Q1295.4,475.79999999999995 1288,475.79999999999995 L1212,475.79999999999995" fill="none" stroke="#333" stroke-width="1.6" stroke-dasharray="1.4 1.4" /><rect x="1238" y="441.59999999999997" width="58.6" height="26.3" rx="9" fill="url(#dith)" opacity="0.5" stroke="#222" stroke-width="1.8" stroke-dasharray="1.5 1.5"/>
<rect x="1426" y="465.7" width="72" height="20.0" rx="8" fill="#000" opacity="0.078" filter="url(#blur5)"/><path d="M1418.5,440.4 L1504.6,440.4 M1418.5,469.1 L1504.6,469.1" fill="none" stroke="#888" stroke-width="1.4" stroke-dasharray="1.4 1.4" /><rect x="1436" y="440.4" width="54" height="28.7" rx="5" fill="url(#dith)" opacity="0.5" stroke="#111" stroke-width="2" stroke-dasharray="1.5 1.5"/><path d="M1465.1,440.4 L1465.1,469.1" fill="none" stroke="#111" stroke-width="2.2" stroke-dasharray="1.4 1.4" />
<rect x="1632" y="457.7" width="72" height="16.0" rx="8" fill="#000" opacity="0.072" filter="url(#blur5)"/><rect x="1628.9" y="429.59999999999997" width="81.3" height="25.2" fill="#fbfbfb"/><path d="M1682,431.7 L1702,451.7" stroke="#ddd" stroke-width="1.5"/><path d="M1628.9,421.3 L1710.2,421.3 M1628.9,463.09999999999997 L1710.2,463.09999999999997" fill="none" stroke="#555" stroke-width="1.6" stroke-dasharray="1.4 1.4" /><path d="M1628.9,429.59999999999997 L1710.2,429.59999999999997 M1628.9,454.8 L1710.2,454.8" fill="none" stroke="#555" stroke-width="1.6" stroke-dasharray="1.4 1.4" /><path d="M1662.5,421.3 L1677.5,421.3 L1677.5,425.7 L1673,428.7 L1673,456.7 L1677.5,459.7 L1677.5,463.09999999999997 L1662.5,463.09999999999997 L1662.5,459.7 L1666.5,456.7 L1666.5,428.7 L1662.5,425.7 Z" fill="url(#dith)" opacity="0.75"/>
<rect x="1838" y="473.7" width="72" height="18.0" rx="8" fill="#000" opacity="0.072" filter="url(#blur5)"/><rect x="1831" y="433.0" width="84.8" height="42.8" fill="#fbfbfb"/><path d="M1886,436.7 L1912,463.7" stroke="#ddd" stroke-width="1.5"/><path d="M1831,433.0 L1915.8,433.0 M1831,475.79999999999995 L1915.8,475.79999999999995" fill="none" stroke="#333" stroke-width="1.6" stroke-dasharray="1.4 1.4" /><rect x="1866.8" y="435.7" width="16.5" height="40" rx="8" fill="url(#dith)" opacity="0.55" stroke="#222" stroke-width="1.8" stroke-dasharray="1.5 1.5"/>
<rect x="2040" y="451.7" width="84" height="20.0" rx="8" fill="#000" opacity="0.078" filter="url(#blur5)"/><rect x="2030" y="424.9" width="98" height="29.3" fill="#fbfbfb"/><path d="M2040,428.7 L2062,450.7" stroke="#ddd" stroke-width="1.5"/><rect x="2089.4" y="426.7" width="38.6" height="26" fill="url(#gtan)" opacity="0.75"/><rect x="2089.4" y="426.7" width="38.6" height="26" fill="url(#dith)" opacity="0.3"/><path d="M2030,424.9 L2128.1,424.9 M2030,454.2 L2128.1,454.2" fill="none" stroke="#222" stroke-width="1.7" stroke-dasharray="1.4 1.4" /><rect x="2071.5" y="425.2" width="17.9" height="29" rx="7" fill="url(#dith)" opacity="0.7" stroke="#111" stroke-width="1.6" stroke-dasharray="1.5 1.5"/>
<path d="M1219,662 C1226,645 1246,638.8 1257,638.8 C1270,638.8 1288,645 1295.4,662 Z" fill="url(#dith)" opacity="0.35"/><path d="M1219,662 C1226,645 1246,638.8 1257,638.8 C1270,638.8 1288,645 1295.4,662" fill="none" stroke="#222" stroke-width="1.8" stroke-dasharray="1.4 1.4" />
<path d="M1429,662 L1430,654 Q1444,646 1464,650 Q1482,658 1500,648 L1502,662" fill="none" stroke="#222" stroke-width="1.8" stroke-dasharray="1.4 1.4" />
<path d="M1622,648 L1640,650 L1650,658 L1658,662 M1684,662 L1696,654 L1712,649" fill="none" stroke="#333" stroke-width="1.8" stroke-dasharray="1.4 1.4" />
<path d="M1851.7,662 L1852.5,648 Q1853,644 1857,644 L1892,644 Q1896,644 1896.5,648 L1897.9,662 Z" fill="url(#dith)" opacity="0.6" stroke="#222" stroke-width="1.6" stroke-dasharray="1.5 1.5"/><path d="M1869.5,643.5 L1874.5,635 L1879.5,643.5" fill="none" stroke="#333" stroke-width="1.5" stroke-dasharray="1.4 1.4" />
<line x1="538.5" y1="817" x2="549.0" y2="829" stroke="#b9b9b9" stroke-width="3.6" stroke-linecap="round"/><line x1="538.5" y1="817" x2="549.0" y2="829" stroke="#e8e8e8" stroke-width="1.2" stroke-linecap="round"/><circle cx="531.5" cy="809" r="9.3" fill="#dcecfb" stroke="#b4b4b4" stroke-width="2.2"/><circle cx="530.5" cy="807" r="5.5" fill="#f4faff"/><ellipse cx="527.5" cy="827" rx="7" ry="6" fill="#2748a8"/><ellipse cx="527.5" cy="825" rx="6" ry="3" fill="#5a86d8" opacity="0.8"/><rect x="523.0" y="825.5" width="9" height="2.6" fill="#fff"/>
<line x1="820.5" y1="817" x2="831.0" y2="829" stroke="#b9b9b9" stroke-width="3.6" stroke-linecap="round"/><line x1="820.5" y1="817" x2="831.0" y2="829" stroke="#e8e8e8" stroke-width="1.2" stroke-linecap="round"/><circle cx="813.5" cy="809" r="9.3" fill="#dcecfb" stroke="#b4b4b4" stroke-width="2.2"/><circle cx="812.5" cy="807" r="5.5" fill="#f4faff"/><ellipse cx="809.5" cy="827" rx="7" ry="6" fill="#2748a8"/><ellipse cx="809.5" cy="825" rx="6" ry="3" fill="#5a86d8" opacity="0.8"/><rect x="805.0" y="825.5" width="9" height="2.6" fill="#fff"/><rect x="808.2" y="822.3" width="2.6" height="9" fill="#fff"/>
</svg>
<div style="position:absolute;left:0;top:0;width:2872px;height:1698px;will-change:transform">
<div style="position:absolute;left:1039.4px;top:15.8px;font:400 27px/27px 'Liberation Sans',sans-serif;color:#fff;letter-spacing:0.32px;white-space:pre;text-shadow:0 1px 1px rgba(0,0,0,0.35)">Rocket design</div>
<div style="position:absolute;left:1262.8px;top:15.8px;font:400 27px/27px 'Liberation Sans',sans-serif;color:#000;letter-spacing:0.88px;white-space:pre;">Motors &amp; Configuration</div>
<div style="position:absolute;left:1604.9px;top:15.8px;font:400 27px/27px 'Liberation Sans',sans-serif;color:#000;letter-spacing:0.98px;white-space:pre;">Flight simulations</div>
<div style="position:absolute;left:61.0px;top:114.1px;font:400 24px/24px 'Liberation Sans',sans-serif;color:#000;letter-spacing:0.50px;white-space:pre;">Rocket</div>
<div style="position:absolute;left:116.4px;top:152.1px;font:400 24px/24px 'Liberation Sans',sans-serif;color:#000;letter-spacing:0.11px;white-space:pre;">Sustainer</div>
<div style="position:absolute;left:241.0px;top:190.1px;font:400 24px/24px 'Liberation Sans',sans-serif;color:#000;letter-spacing:0.36px;white-space:pre;">Nose cone</div>
<div style="position:absolute;left:296.4px;top:228.1px;font:400 24px/24px 'Liberation Sans',sans-serif;color:#000;letter-spacing:0.61px;white-space:pre;">Unspecified</div>
<div style="position:absolute;left:296.4px;top:266.1px;font:400 24px/24px 'Liberation Sans',sans-serif;color:#000;letter-spacing:1.25px;white-space:pre;">Tube coupler</div>
<div style="position:absolute;left:241.6px;top:304.1px;font:400 24px/24px 'Liberation Sans',sans-serif;color:#000;letter-spacing:0.59px;white-space:pre;">Body tube</div>
<div style="position:absolute;left:297.0px;top:342.1px;font:400 24px/24px 'Liberation Sans',sans-serif;color:#000;letter-spacing:0.75px;white-space:pre;">Centering ring</div>
<div style="position:absolute;left:297.0px;top:380.1px;font:400 24px/24px 'Liberation Sans',sans-serif;color:#000;letter-spacing:0.75px;white-space:pre;">Centering ring</div>
<div style="position:absolute;left:297.0px;top:418.1px;font:400 24px/24px 'Liberation Sans',sans-serif;color:#000;letter-spacing:0.35px;white-space:pre;">Launch lug</div>
<div style="position:absolute;left:297.0px;top:456.1px;font:400 24px/24px 'Liberation Sans',sans-serif;color:#000;letter-spacing:0.35px;white-space:pre;">Launch lug</div>
<div style="position:absolute;left:297.0px;top:494.1px;font:400 24px/24px 'Liberation Sans',sans-serif;color:#000;letter-spacing:0.96px;white-space:pre;">Freeform fin set</div>
<div style="position:absolute;left:297.0px;top:532.1px;font:400 24px/24px 'Liberation Sans',sans-serif;color:#000;letter-spacing:0.67px;white-space:pre;">Engine block</div>
<div style="position:absolute;left:297.0px;top:570.1px;font:400 24px/24px 'Liberation Sans',sans-serif;color:#000;letter-spacing:0.30px;white-space:pre;">Parachute</div>
<div style="position:absolute;left:297.0px;top:608.1px;font:400 24px/24px 'Liberation Sans',sans-serif;color:#000;letter-spacing:0.39px;white-space:pre;">Shock cord</div>
<div style="position:absolute;left:921.0px;top:144.1px;font:400 27px/27px 'Liberation Sans',sans-serif;color:#808080;letter-spacing:0.07px;white-space:pre;">Move up</div>
<div style="position:absolute;left:903.5px;top:225.9px;font:400 27px/27px 'Liberation Sans',sans-serif;color:#808080;letter-spacing:0.12px;white-space:pre;">Move down</div>
<div style="position:absolute;left:950.2px;top:357.6px;font:400 27px/27px 'Liberation Sans',sans-serif;color:#808080;letter-spacing:-0.31px;white-space:pre;">Edit</div>
<div style="position:absolute;left:909.3px;top:467.6px;font:400 27px/27px 'Liberation Sans',sans-serif;color:#000;letter-spacing:0.13px;white-space:pre;">New stage</div>
<div style="position:absolute;left:941.3px;top:577.0px;font:400 23px/23px 'Liberation Sans',sans-serif;color:#808080;letter-spacing:-0.54px;white-space:pre;">Delete</div>
<div style="position:absolute;left:1156.0px;top:74.4px;font:700 26px/26px 'Liberation Sans',sans-serif;color:#000;letter-spacing:1.52px;white-space:pre;">Add new component</div>
<div style="position:absolute;left:1183.0px;top:142.4px;font:400 26px/26px 'Liberation Sans',sans-serif;color:#000;letter-spacing:1.02px;white-space:pre;">Body components and fin sets</div>
<div style="position:absolute;left:1182.5px;top:359.0px;font:400 26px/26px 'Liberation Sans',sans-serif;color:#000;letter-spacing:1.20px;white-space:pre;">Inner component</div>
<div style="position:absolute;left:1182.5px;top:574.4px;font:400 26px/26px 'Liberation Sans',sans-serif;color:#000;letter-spacing:0.81px;white-space:pre;">Mass objects</div>
<div style="position:absolute;left:1207.5px;top:282.3px;font:400 20.5px/20.5px 'Liberation Sans',sans-serif;color:#000;letter-spacing:-0.13px;white-space:pre;">Nose cone</div>
<div style="position:absolute;left:1415.4px;top:282.3px;font:400 20.5px/20.5px 'Liberation Sans',sans-serif;color:#000;letter-spacing:0.11px;white-space:pre;">Body tube</div>
<div style="position:absolute;left:1619.2px;top:282.3px;font:400 20.5px/20.5px 'Liberation Sans',sans-serif;color:#000;letter-spacing:0.92px;white-space:pre;">Transition</div>
<div style="position:absolute;left:1816.8px;top:282.3px;font:400 20.5px/20.5px 'Liberation Sans',sans-serif;color:#808080;letter-spacing:0.79px;white-space:pre;">Trapezoidal</div>
<div style="position:absolute;left:2040.0px;top:282.3px;font:400 20.5px/20.5px 'Liberation Sans',sans-serif;color:#808080;letter-spacing:0.53px;white-space:pre;">Elliptical</div>
<div style="position:absolute;left:2242.5px;top:282.3px;font:400 20.5px/20.5px 'Liberation Sans',sans-serif;color:#808080;letter-spacing:0.55px;white-space:pre;">Freeform</div>
<div style="position:absolute;left:2447.8px;top:293.1px;font:400 20.5px/20.5px 'Liberation Sans',sans-serif;color:#808080;letter-spacing:0.60px;white-space:pre;">Tube fins</div>
<div style="position:absolute;left:2646.6px;top:282.3px;font:400 20.5px/20.5px 'Liberation Sans',sans-serif;color:#808080;letter-spacing:0.28px;white-space:pre;">Launch lug</div>
<div style="position:absolute;left:1207.2px;top:498.4px;font:400 20.5px/20.5px 'Liberation Sans',sans-serif;color:#808080;letter-spacing:0.57px;white-space:pre;">Inner tube</div>
<div style="position:absolute;left:1424.3px;top:498.4px;font:400 20.5px/20.5px 'Liberation Sans',sans-serif;color:#808080;letter-spacing:0.58px;white-space:pre;">Coupler</div>
<div style="position:absolute;left:1620.5px;top:476.5px;font:400 20.5px/20.5px 'Liberation Sans',sans-serif;color:#808080;letter-spacing:0.76px;white-space:pre;">Centering</div>
<div style="position:absolute;left:1649.8px;top:502.9px;font:400 20.5px/20.5px 'Liberation Sans',sans-serif;color:#808080;letter-spacing:0.70px;white-space:pre;">ring</div>
<div style="position:absolute;left:1829.7px;top:498.4px;font:400 20.5px/20.5px 'Liberation Sans',sans-serif;color:#808080;letter-spacing:0.46px;white-space:pre;">Bulkhead</div>
<div style="position:absolute;left:2049.3px;top:476.5px;font:400 20.5px/20.5px 'Liberation Sans',sans-serif;color:#808080;letter-spacing:-0.51px;white-space:pre;">Engine</div>
<div style="position:absolute;left:2055.1px;top:502.9px;font:400 20.5px/20.5px 'Liberation Sans',sans-serif;color:#808080;letter-spacing:0.49px;white-space:pre;">block</div>
<div style="position:absolute;left:30.0px;top:799.5px;font:400 27px/27px 'Liberation Sans',sans-serif;color:#000;letter-spacing:0.12px;white-space:pre;">View Type:</div>
<div style="position:absolute;left:206.0px;top:799.5px;font:400 27px/27px 'Liberation Sans',sans-serif;color:#000;letter-spacing:-0.01px;white-space:pre;">Side view</div>
<div style="position:absolute;left:2611.5px;top:799.5px;font:400 27px/27px 'Liberation Sans',sans-serif;color:#000;letter-spacing:0.65px;white-space:pre;">[B6-4]</div>
<div style="position:absolute;left:2310.7px;top:799.5px;font:400 27px/27px 'Liberation Sans',sans-serif;color:#000;letter-spacing:1.03px;white-space:pre;">Flight configuration:</div>
<div style="position:absolute;left:594.7px;top:803.1px;font:400 27px/27px 'Liberation Sans',sans-serif;color:#000;letter-spacing:-0.32px;white-space:pre;">Fit (38.6%)</div>
<div style="position:absolute;left:965.7px;top:799.5px;font:400 27px/27px 'Liberation Sans',sans-serif;color:#000;letter-spacing:-0.46px;white-space:pre;">Stage 1</div>
<div style="position:absolute;left:53.2px;top:891.9px;font:400 27px/27px 'Liberation Sans',sans-serif;color:#000;letter-spacing:0.00px;white-space:pre;">0&deg;</div>
<div style="position:absolute;left:116.7px;top:897.0px;font:400 18px/18px 'Liberation Sans',sans-serif;color:#000;letter-spacing:0.00px;white-space:pre;">cm</div>
<div style="position:absolute;left:262.9px;top:887.3px;font:400 20.5px/20.5px 'Liberation Sans',sans-serif;color:#000;letter-spacing:0.00px;white-space:pre;">&minus;5</div>
<div style="position:absolute;left:454.7px;top:887.3px;font:700 20.5px/20.5px 'Liberation Sans',sans-serif;color:#000;letter-spacing:0.00px;white-space:pre;">0</div>
<div style="position:absolute;left:649.9px;top:887.3px;font:400 20.5px/20.5px 'Liberation Sans',sans-serif;color:#000;letter-spacing:0.00px;white-space:pre;">5</div>
<div style="position:absolute;left:845.1px;top:887.3px;font:700 20.5px/20.5px 'Liberation Sans',sans-serif;color:#000;letter-spacing:0.00px;white-space:pre;">10</div>
<div style="position:absolute;left:1039.0px;top:887.3px;font:400 20.5px/20.5px 'Liberation Sans',sans-serif;color:#000;letter-spacing:0.00px;white-space:pre;">15</div>
<div style="position:absolute;left:1232.9px;top:887.3px;font:700 20.5px/20.5px 'Liberation Sans',sans-serif;color:#000;letter-spacing:0.00px;white-space:pre;">20</div>
<div style="position:absolute;left:1427.9px;top:887.3px;font:400 20.5px/20.5px 'Liberation Sans',sans-serif;color:#000;letter-spacing:0.00px;white-space:pre;">25</div>
<div style="position:absolute;left:1622.9px;top:887.3px;font:700 20.5px/20.5px 'Liberation Sans',sans-serif;color:#000;letter-spacing:0.00px;white-space:pre;">30</div>
<div style="position:absolute;left:1817.7px;top:887.3px;font:400 20.5px/20.5px 'Liberation Sans',sans-serif;color:#000;letter-spacing:0.00px;white-space:pre;">35</div>
<div style="position:absolute;left:2012.5px;top:887.3px;font:700 20.5px/20.5px 'Liberation Sans',sans-serif;color:#000;letter-spacing:0.00px;white-space:pre;">40</div>
<div style="position:absolute;left:2207.4px;top:887.3px;font:400 20.5px/20.5px 'Liberation Sans',sans-serif;color:#000;letter-spacing:0.00px;white-space:pre;">45</div>
<div style="position:absolute;left:2402.2px;top:887.3px;font:700 20.5px/20.5px 'Liberation Sans',sans-serif;color:#000;letter-spacing:0.00px;white-space:pre;">50</div>
<div style="position:absolute;left:2597.0px;top:887.3px;font:400 20.5px/20.5px 'Liberation Sans',sans-serif;color:#000;letter-spacing:0.00px;white-space:pre;">55</div>
<div style="position:absolute;left:2790.7px;top:887.3px;font:700 20.5px/20.5px 'Liberation Sans',sans-serif;color:#000;letter-spacing:0.00px;white-space:pre;">60</div>
<div style="position:absolute;left:115.0px;top:1061.2px;font:400 20.5px/20.5px 'Liberation Sans',sans-serif;color:#000;letter-spacing:-5.07px;white-space:pre;">&minus;5</div>
<div style="position:absolute;left:114.8px;top:1252.5px;font:700 20.5px/20.5px 'Liberation Sans',sans-serif;color:#000;letter-spacing:0.00px;white-space:pre;">0</div>
<div style="position:absolute;left:115.9px;top:1446.9px;font:400 20.5px/20.5px 'Liberation Sans',sans-serif;color:#000;letter-spacing:0.00px;white-space:pre;">5</div>
<div style="position:absolute;left:169.3px;top:937.9px;font:400 23px/23px 'Liberation Sans',sans-serif;color:#000;letter-spacing:-0.38px;white-space:pre;">Rocket</div>
<div style="position:absolute;left:169.3px;top:968.2px;font:400 23px/23px 'Liberation Sans',sans-serif;color:#000;letter-spacing:0.39px;white-space:pre;">Length 53.4 cm, max. diameter 2.6 cm</div>
<div style="position:absolute;left:169.3px;top:998.6px;font:400 23px/23px 'Liberation Sans',sans-serif;color:#000;letter-spacing:0.47px;white-space:pre;">Mass with motors 85.2 g</div>
<div style="position:absolute;left:2649.7px;top:938.1px;font:400 23px/23px 'Liberation Sans',sans-serif;color:#000;letter-spacing:0.31px;white-space:pre;">Stability:7.04 cal</div>
<div style="position:absolute;left:2702.0px;top:967.8px;font:400 23px/23px 'Liberation Sans',sans-serif;color:#000;letter-spacing:-0.25px;white-space:pre;">CG:25.9 cm</div>
<div style="position:absolute;left:2705.9px;top:998.8px;font:400 23px/23px 'Liberation Sans',sans-serif;color:#000;letter-spacing:-0.40px;white-space:pre;">CP:44.2 cm</div>
<div style="position:absolute;left:2705.7px;top:1032.2px;font:400 19px/19px 'Liberation Sans',sans-serif;color:#808080;letter-spacing:0.82px;white-space:pre;">at M=0.30</div>
<div style="position:absolute;left:168.6px;top:1525.7px;font:400 23px/23px 'Liberation Sans',sans-serif;color:#0c0c8c;letter-spacing:0.18px;white-space:pre;">Apogee:</div>
<div style="position:absolute;left:366.6px;top:1525.7px;font:400 23px/23px 'Liberation Sans',sans-serif;color:#0c0c8c;letter-spacing:0.49px;white-space:pre;">92 m</div>
<div style="position:absolute;left:168.6px;top:1556.2px;font:400 23px/23px 'Liberation Sans',sans-serif;color:#0c0c8c;letter-spacing:0.28px;white-space:pre;">Max. velocity:</div>
<div style="position:absolute;left:366.6px;top:1556.2px;font:400 23px/23px 'Liberation Sans',sans-serif;color:#0c0c8c;letter-spacing:0.46px;white-space:pre;">42.3 m/s&nbsp; (Mach 0.12)</div>
<div style="position:absolute;left:168.6px;top:1586.2px;font:400 23px/23px 'Liberation Sans',sans-serif;color:#0c0c8c;letter-spacing:0.24px;white-space:pre;">Max. acceleration:</div>
<div style="position:absolute;left:366.6px;top:1586.2px;font:400 23px/23px 'Liberation Sans',sans-serif;color:#0c0c8c;letter-spacing:1.37px;white-space:pre;">130 m/s<sup style="font-size:14px;vertical-align:0;position:relative;top:-9px">2</sup></div>
<div style="position:absolute;left:160.2px;top:1633.0px;font:400 20px/20px 'Liberation Sans',sans-serif;color:#000;letter-spacing:0.17px;white-space:pre;">Click to select</div>
<div style="position:absolute;left:310.0px;top:1633.0px;font:400 20px/20px 'Liberation Sans',sans-serif;color:#000;letter-spacing:0.35px;white-space:pre;">Shift+click to select other</div>
<div style="position:absolute;left:566.5px;top:1633.0px;font:400 20px/20px 'Liberation Sans',sans-serif;color:#000;letter-spacing:0.65px;white-space:pre;">Double-click to edit</div>
<div style="position:absolute;left:772.0px;top:1633.0px;font:400 20px/20px 'Liberation Sans',sans-serif;color:#000;letter-spacing:0.37px;white-space:pre;">Click+drag to move</div>
</div>
</body></html>
